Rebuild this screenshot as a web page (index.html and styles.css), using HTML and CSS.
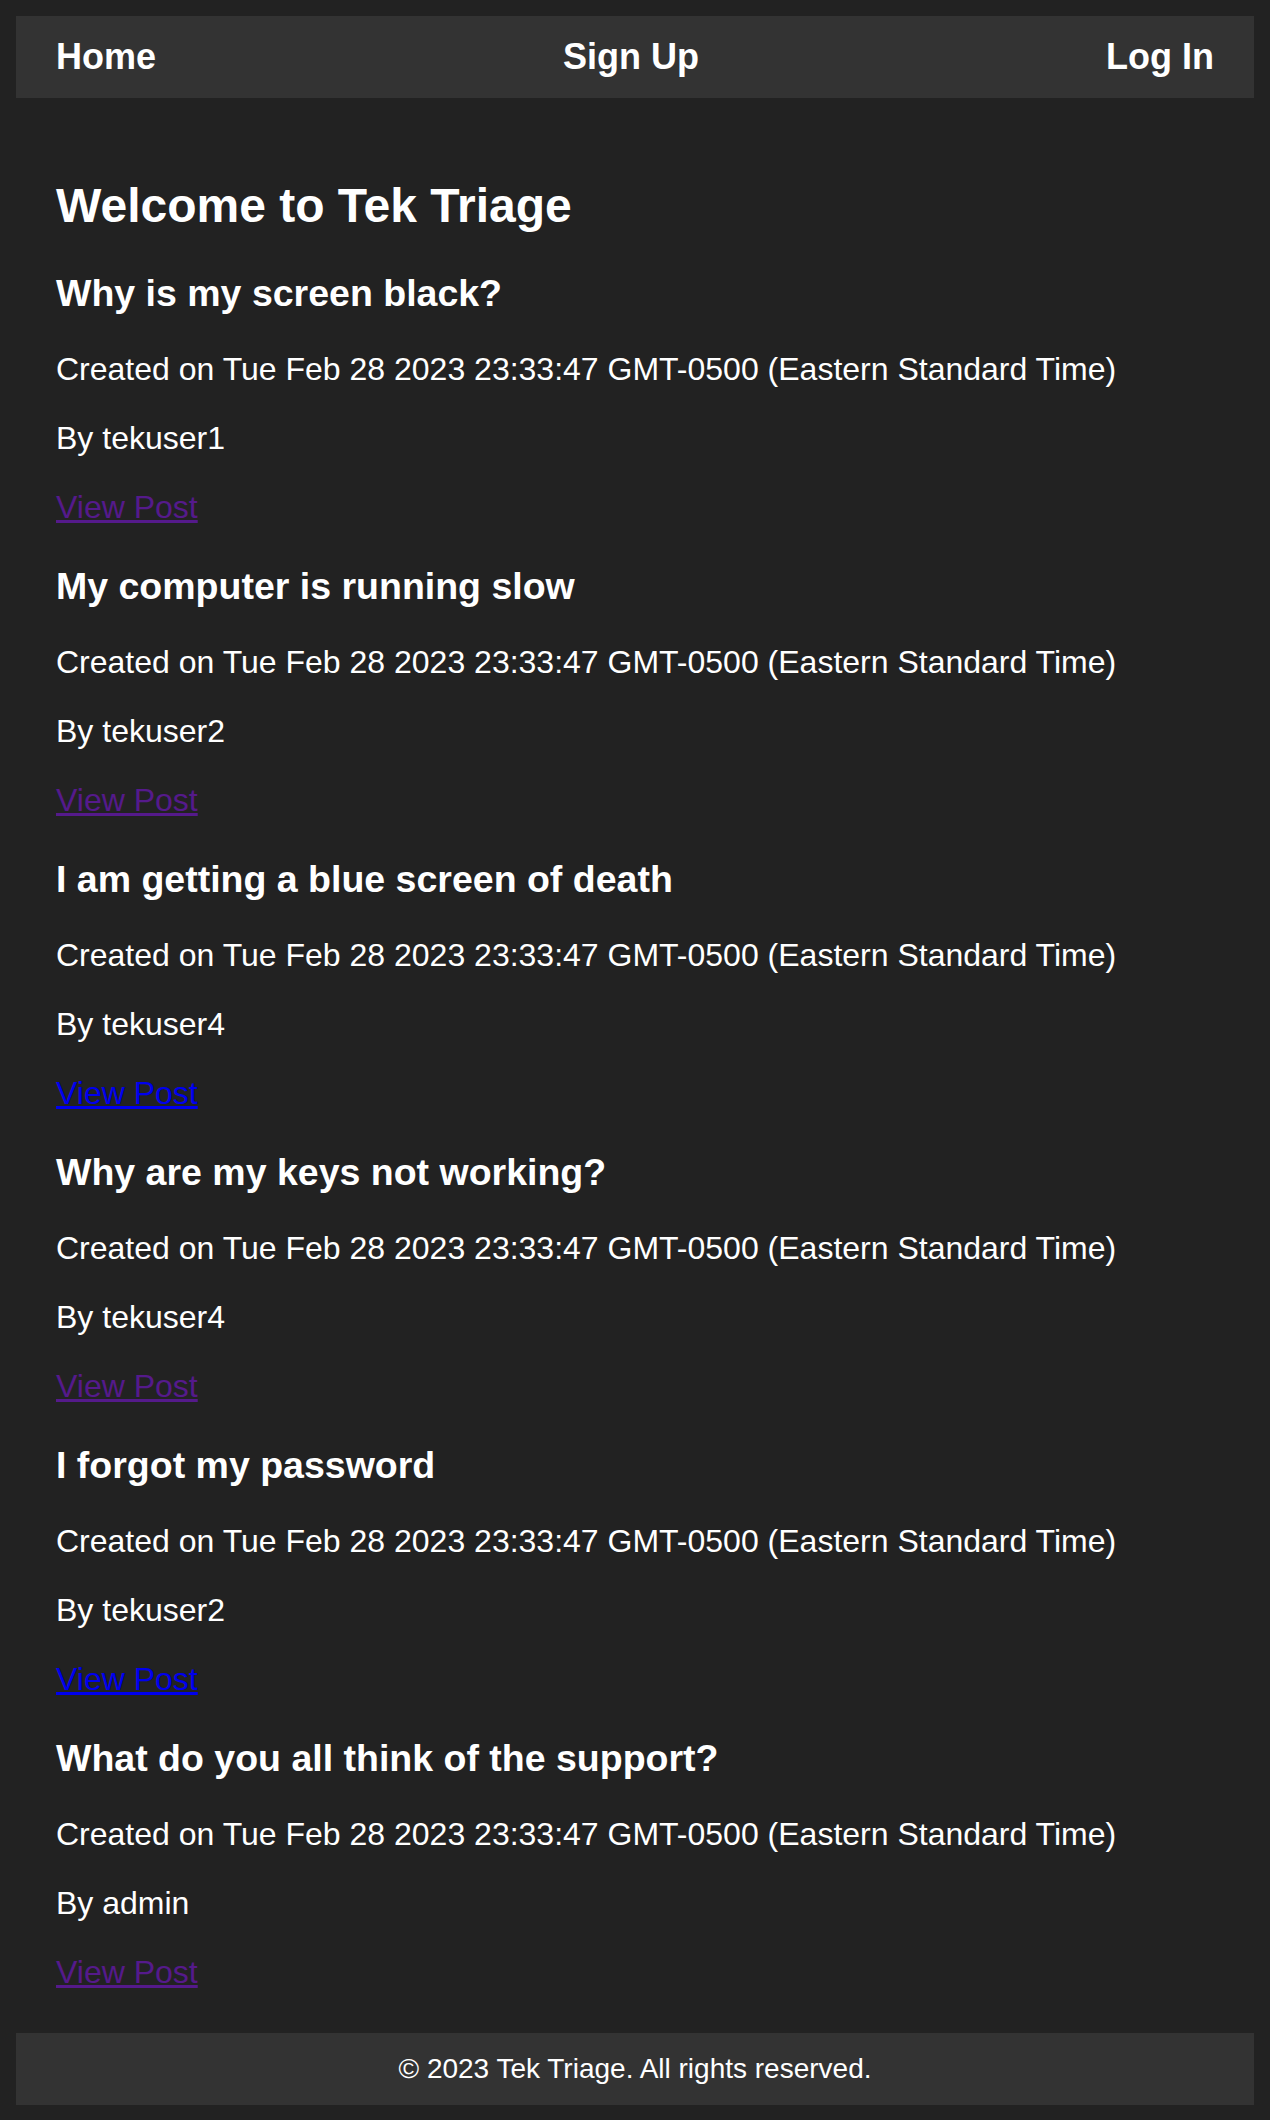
FILE: index.html
```html
<!DOCTYPE html>
<html lang="en">
<head>
<meta charset="utf-8">
<title>Tek Triage</title>
<link rel="stylesheet" href="styles.css">
</head>
<body>
<header class="site-header">
  <nav class="nav">
    <a class="nav-link" href="#">Home</a>
    <a class="nav-link" href="#">Sign Up</a>
    <a class="nav-link" href="#">Log In</a>
  </nav>
</header>
<main class="content">
  <h1 class="page-title">Welcome to Tek Triage</h1>

  <section class="post">
    <h2 class="post-title">Why is my screen black?</h2>
    <p class="post-meta">Created on Tue Feb 28 2023 23:33:47 GMT-0500 (Eastern Standard Time)</p>
    <p class="post-meta">By tekuser1</p>
    <p class="post-meta"><a class="post-link visited" href="#">View Post</a></p>
  </section>

  <section class="post">
    <h2 class="post-title">My computer is running slow</h2>
    <p class="post-meta">Created on Tue Feb 28 2023 23:33:47 GMT-0500 (Eastern Standard Time)</p>
    <p class="post-meta">By tekuser2</p>
    <p class="post-meta"><a class="post-link visited" href="#">View Post</a></p>
  </section>

  <section class="post">
    <h2 class="post-title">I am getting a blue screen of death</h2>
    <p class="post-meta">Created on Tue Feb 28 2023 23:33:47 GMT-0500 (Eastern Standard Time)</p>
    <p class="post-meta">By tekuser4</p>
    <p class="post-meta"><a class="post-link unvisited" href="#">View Post</a></p>
  </section>

  <section class="post">
    <h2 class="post-title">Why are my keys not working?</h2>
    <p class="post-meta">Created on Tue Feb 28 2023 23:33:47 GMT-0500 (Eastern Standard Time)</p>
    <p class="post-meta">By tekuser4</p>
    <p class="post-meta"><a class="post-link visited" href="#">View Post</a></p>
  </section>

  <section class="post">
    <h2 class="post-title">I forgot my password</h2>
    <p class="post-meta">Created on Tue Feb 28 2023 23:33:47 GMT-0500 (Eastern Standard Time)</p>
    <p class="post-meta">By tekuser2</p>
    <p class="post-meta"><a class="post-link unvisited" href="#">View Post</a></p>
  </section>

  <section class="post">
    <h2 class="post-title">What do you all think of the support?</h2>
    <p class="post-meta">Created on Tue Feb 28 2023 23:33:47 GMT-0500 (Eastern Standard Time)</p>
    <p class="post-meta">By admin</p>
    <p class="post-meta"><a class="post-link visited" href="#">View Post</a></p>
  </section>
</main>
<footer class="site-footer">
  <p class="footer-text">© 2023 Tek Triage. All rights reserved.</p>
</footer>
</body>
</html>
```
FILE: styles.css
```css
html {
  background: #222222;
}

body {
  margin: 16px;
  background: #222222;
  color: #ffffff;
  font-family: "Liberation Sans", Arial, Helvetica, sans-serif;
}

.site-header {
  background: #333333;
  padding: 20px 40px;
}

.nav {
  display: flex;
  justify-content: space-between;
  align-items: center;
}

.nav-link {
  color: #ffffff;
  font-weight: bold;
  font-size: 36px;
  text-decoration: none;
}

.content {
  padding: 48px 40px 10px;
}

.page-title {
  font-size: 48px;
  font-weight: bold;
  margin: 32px 0;
}

.post-title {
  font-size: 37.5px;
  font-weight: bold;
  margin: 39px 0 36px;
}

.post-meta {
  font-size: 32px;
  margin: 32px 0;
}

.post-link {
  text-decoration: underline;
}

.post-link.visited {
  color: #551a8b;
}

.post-link.unvisited {
  color: #0000ee;
}

.site-footer {
  background: #333333;
  padding: 20px;
  text-align: center;
}

.footer-text {
  margin: 0;
  font-size: 28px;
}
```
